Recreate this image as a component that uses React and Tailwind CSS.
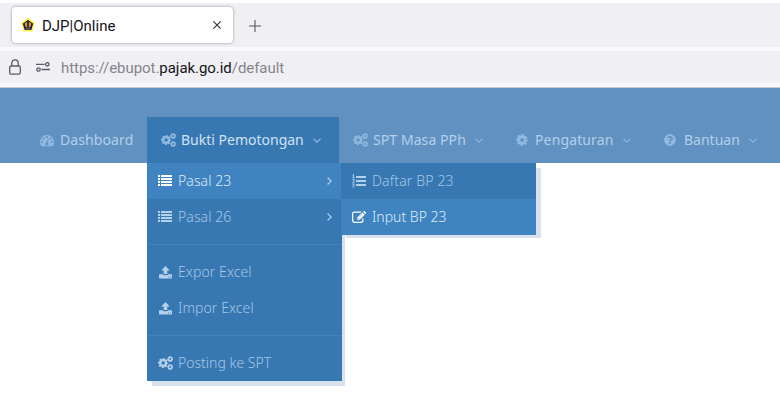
import { FaQuestionCircle } from "react-icons/fa";

function CogsIcon() {
  return (
    <svg width="15" height="14" viewBox="0 0 15 14" fill="none" stroke="currentColor">
      <circle cx="5.1" cy="7" r="2.9" strokeWidth="2.3" />
      <circle cx="5.1" cy="7" r="4.4" strokeWidth="1.4" strokeDasharray="1.9 1.556" strokeDashoffset="0.95" />
      <circle cx="12.2" cy="3" r="1.75" strokeWidth="1.6" />
      <circle cx="12.2" cy="3" r="2.5" strokeWidth="0.9" strokeDasharray="1.4 1.218" strokeDashoffset="0.7" />
      <circle cx="12.2" cy="11" r="1.75" strokeWidth="1.6" />
      <circle cx="12.2" cy="11" r="2.5" strokeWidth="0.9" strokeDasharray="1.4 1.218" strokeDashoffset="0.7" />
    </svg>
  );
}

function CogIcon() {
  return (
    <svg className="ml-px" width="12" height="12" viewBox="0 0 12 12" fill="none" stroke="currentColor">
      <circle cx="6" cy="6" r="3.3" strokeWidth="2.9" />
      <circle cx="6" cy="6" r="5.1" strokeWidth="1.7" strokeDasharray="2.3 1.706" strokeDashoffset="1.15" />
    </svg>
  );
}

function GaugeIcon() {
  return (
    <svg className="mt-px" width="14" height="12" viewBox="0 0 14 12" fill="currentColor">
      <path
        fillRule="evenodd"
        d="M7 0a7 7 0 0 1 5.9 10.8c-.2.3-.4.5-.8.5H1.9c-.4 0-.6-.2-.8-.5A7 7 0 0 1 7 0ZM2 6a1 1 0 1 0 0 2 1 1 0 0 0 0-2Zm1.5-3.5a1 1 0 1 0 0 2 1 1 0 0 0 0-2ZM7 1a1 1 0 1 0 0 2 1 1 0 0 0 0-2Zm3.5 1.5a1 1 0 1 0 0 2 1 1 0 0 0 0-2ZM12 6a1 1 0 1 0 0 2 1 1 0 0 0 0-2ZM7.8 4.2 6.8 7.6a1.5 1.5 0 1 0 1 .3l.9-3.4Z"
      />
    </svg>
  );
}

function UploadIcon() {
  return (
    <svg className="ml-px" width="13" height="13" viewBox="0 0 13 13" fill="currentColor">
      <path d="M6.5 0 10.8 4.5H8.3V8H4.7V4.5H2.2Z" />
      <path fillRule="evenodd" d="M.6 8.2h3.3c.3.8.8 1 1.4 1h2.4c.6 0 1.1-.2 1.4-1h3.3c.4 0 .6.2.6.6v3c0 .4-.2.6-.6.6H.6c-.4 0-.6-.2-.6-.6v-3c0-.4.2-.6.6-.6Zm8.5 2.4v.8h.8v-.8Zm1.9 0v.8h.8v-.8Z" />
    </svg>
  );
}

function EditIcon() {
  return (
    <svg width="15" height="12" viewBox="0 0 15 12" fill="none" stroke="currentColor">
      <path d="M9 1.1H2.6A2 2 0 0 0 .6 3v6.3a2 2 0 0 0 2 2h6.3a2 2 0 0 0 2-2V7.6" strokeWidth="1.2" />
      <path d="M5.3 8.8V6.5L10.4 1.4 12.7 3.7 7.6 8.8ZM11 .8l.7-.6c.3-.2.6-.2.9 0l1.3 1.3c.3.3.3.6 0 .9l-.7.7Z" fill="currentColor" stroke="none" />
      <path d="M6 7.1 7 8.1M7.6 5.9l2.6-2.6" stroke="#4083c1" strokeWidth="0.6" />
    </svg>
  );
}

function ListIcon() {
  return (
    <svg width="14" height="12" viewBox="0 0 14 12" fill="currentColor" shapeRendering="crispEdges">
      {[0, 3, 6, 9].map((y) => (
        <g key={y}>
          <rect x="0" y={y} width="2" height="2" />
          <rect x="3" y={y} width="11" height="2" />
        </g>
      ))}
    </svg>
  );
}

function NumberedListIcon() {
  return (
    <svg width="14" height="14" viewBox="0 0 14 14" fill="none" stroke="currentColor">
      <path d="M4 3h10M4 7h10M4 11h10" strokeWidth="2" />
      <path d="M.5 1.2 1.5.5v3M.3 3.6h2.4M.3 5.5h2v1.2L.6 8.3h2.1M.3 10h2L1.3 11.2c1.6 0 1.3 2.3-1 1.8" strokeWidth="0.9" />
    </svg>
  );
}

function Chevron({ right = false }) {
  return (
    <svg width={right ? 5 : 8} height={right ? 8 : 5} viewBox={right ? "0 0 5 8" : "0 0 8 5"} fill="none" stroke="currentColor" strokeWidth="1.1">
      <path d={right ? "M.6.5 4.2 4 .6 7.5" : "M.4.6 4 4.2 7.6.6"} />
    </svg>
  );
}

function NavItem({ icon, label, className, chevron = true, textClass = "text-[#b3cfea]", iconClass = "text-[#8fb9e0]" }) {
  return (
    <div className={`flex h-[46px] shrink-0 items-center text-[14px] ${textClass} ${className}`}>
      <span className={`flex w-[20px] shrink-0 ${iconClass}`}>{icon}</span>
      <span className="whitespace-nowrap pb-[2px]">{label}</span>
      {chevron && <span className={`ml-[9px] ${iconClass}`}><Chevron /></span>}
    </div>
  );
}

function MenuItem({ icon, label, active = false, arrow = false, labelClass = "tracking-[0.08px]" }) {
  return (
    <div className={`flex h-9 items-center pl-[11px] pr-[10px] text-[14px] font-light ${active ? "bg-[#4083c1] text-[#dfebf7]" : "text-[#a5c6e4]"}`}>
      <span className={`flex w-5 shrink-0 ${active ? "text-white" : "text-[#b4d1ec]"}`}>{icon}</span>
      <span className={`grow whitespace-nowrap pb-[2px] ${labelClass}`}>{label}</span>
      {arrow && <span className="text-[#b4d1ec]"><Chevron right /></span>}
    </div>
  );
}

function Browser() {
  return (
    <header className="h-[88px] bg-[#f9f9fb] font-[Roboto,sans-serif] text-[15px]">
      <div className="h-[3px] bg-white" />
      <div className="flex h-11 bg-[#f0eff4] pl-3 pt-1">
        <div className="flex h-9 w-[221px] items-center rounded-[4px] bg-white pl-[9px] pr-3 text-[#15141a] shadow-[0_0_3px_rgba(0,0,0,0.4)]">
          <svg width="14" height="14" viewBox="0 0 14 14">
            <path d="M7 .8 13.1 5.3 10.9 12.8H3.1L.9 5.3Z" fill="#211c48" stroke="#fff53f" strokeWidth="1.5" strokeLinejoin="round" />
            <path d="M3.8 5.2C4.7 4.3 5.3 4.1 6 4.3v5.3C4.5 9.3 3.8 7.6 3.8 5.2ZM10.2 5.2C9.3 4.3 8.7 4.1 8 4.3v5.3c1.5-.3 2.2-2 2.2-4.4Z" fill="#d79d25" />
            <path d="M7 3.2v6.5" stroke="#4b3c2d" strokeWidth="1.4" />
            <path d="M4.6 10.8h4.8" stroke="#77738b" strokeWidth="1" />
          </svg>
          <span className="ml-[7px] grow pt-[2px]">DJP|Online</span>
          <svg width="8" height="8" viewBox="0 0 8 8" stroke="#303036" strokeWidth="1.1"><path d="m.3.3 7.4 7.4m0-7.4L.3 7.7" /></svg>
        </div>
        <svg className="ml-4 mt-[13px]" width="12" height="12" viewBox="0 0 12 12" stroke="#55555b" strokeWidth="1.1"><path d="M6 0v12M0 6h12" /></svg>
      </div>
      <div className="mt-1 flex h-8 items-center bg-[#f0eff4] pl-[9px]">
        <svg width="12" height="16" viewBox="0 0 12 16" fill="none" stroke="#5b5b66" strokeWidth="1.3">
          <rect x=".7" y="7" width="10.6" height="8.2" rx="1.6" /><path d="M2.8 7V4a3.2 3.2 0 0 1 6.4 0v3" />
        </svg>
        <svg className="ml-[15px]" width="14" height="10" viewBox="0 0 14 10" fill="none" stroke="#5b5b66" strokeWidth="1.3">
          <path d="M0 2.3h8.5M5.5 7.5H14" /><circle cx="11.3" cy="2.3" r="1.7" /><circle cx="2.5" cy="7.5" r="1.7" />
        </svg>
        <span className="ml-[11px] whitespace-nowrap pt-[2px] tracking-[-0.05px] text-[#85858b]">https://ebupot.<span className="text-[#15141a]">pajak.go.id</span>/default</span>
      </div>
      <div className="mt-1 h-px bg-[#c9c8ca]" />
    </header>
  );
}

export default function App() {
  return (
    <div className="h-[405px] w-[780px] overflow-hidden bg-white">
      <Browser />
      <div className="font-['Noto_Sans',sans-serif]">
        <nav className="flex h-[75px] bg-[#6191c0] pt-[29px]">
          <NavItem className="w-[147px] pl-10 tracking-[0.1px]" chevron={false} icon={<GaugeIcon />} label="Dashboard" />
          <NavItem className="w-[192px] bg-[#3878b2] pl-[14px]" textClass="text-[#cfe1f2]" iconClass="text-[#93bce2]" icon={<CogsIcon />} label="Bukti Pemotongan" />
          <NavItem className="w-[176px] pl-[14px] tracking-[0.08px]" icon={<CogsIcon />} label="SPT Masa PPh" />
          <NavItem className="w-[149px] tracking-[0.13px]" icon={<CogIcon />} label="Pengaturan" />
          <NavItem icon={<FaQuestionCircle size={12} />} label="Bantuan" />
        </nav>
        <div className="relative ml-[147px] w-[195px]">
          <div className="h-[218px] bg-[#3878b2] shadow-[5px_5px_0_#d8e2ef] [clip-path:inset(0_-3px_-5px_0)]">
            <MenuItem icon={<ListIcon />} label="Pasal 23" active arrow />
            <MenuItem icon={<ListIcon />} label="Pasal 26" arrow />
            <div className="my-[9px] h-px bg-[#4083c1]" />
            <MenuItem icon={<UploadIcon />} label="Expor Excel" />
            <MenuItem icon={<UploadIcon />} label="Impor Excel" />
            <div className="my-[9px] h-px bg-[#4083c1]" />
            <MenuItem icon={<CogsIcon />} label="Posting ke SPT" labelClass="tracking-normal" />
          </div>
          <div className="absolute left-[194px] top-0 w-[195px] bg-[#3878b2] shadow-[5px_5px_0_#d8e2ef] [clip-path:inset(0_-5px_-3px_0)]">
            <MenuItem icon={<NumberedListIcon />} label="Daftar BP 23" labelClass="tracking-[0.15px]" />
            <MenuItem icon={<EditIcon />} label="Input BP 23" active labelClass="tracking-normal" />
          </div>
        </div>
      </div>
    </div>
  );
}
